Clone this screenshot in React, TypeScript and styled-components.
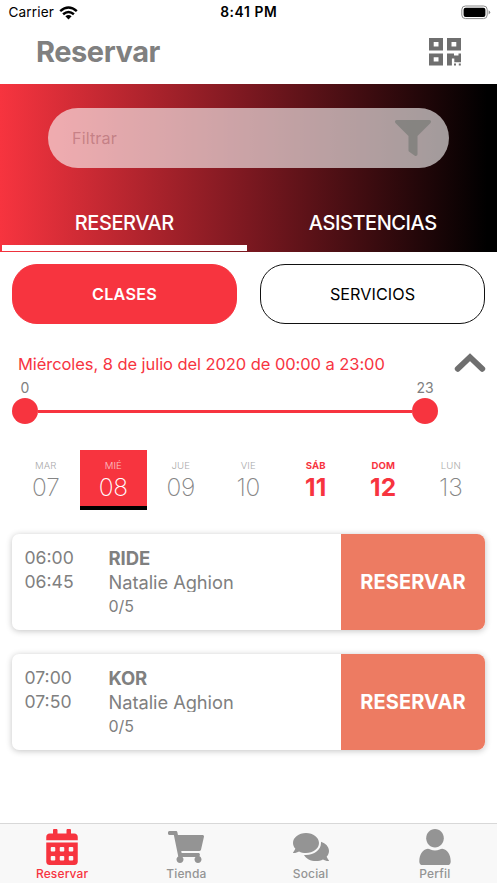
import React from 'react';
import styled, { createGlobalStyle, css } from 'styled-components';
import { FaCalendarAlt, FaShoppingCart, FaComments, FaFilter } from 'react-icons/fa';

const RED = '#f7343f';
const GREY = '#808080';

const GlobalStyle = createGlobalStyle`
  * { box-sizing: border-box; }
  body { margin: 0; background: #fff; font-family: Inter, "Liberation Sans", sans-serif; }
  button { font-family: inherit; border: 0; padding: 0; background: none; margin: 0; }
`;

const Screen = styled.div`
  width: 497px;
  height: 883px;
  display: flex;
  flex-direction: column;
  overflow: hidden;
  background: #fff;
  white-space: nowrap;
`;

const StatusBar = styled.div`
  height: 25px;
  flex: none;
  display: grid;
  grid-template-columns: 1fr auto 1fr;
  align-items: center;
  padding: 0 6px 0 8.5px;
  font-size: 13.6px;
  line-height: 25px;
  color: #000;
`;
const Carrier = styled.div`
  display: flex;
  align-items: center;
  gap: 5px;
  letter-spacing: 0.15px;
`;
const Clock = styled.div`
  font-weight: 600;
  font-size: 13.8px;
  letter-spacing: 0.6px;
  margin-right: 2px;
`;
const Battery = styled.svg`
  justify-self: end;
`;

const TitleBar = styled.header`
  height: 59px;
  flex: none;
  display: flex;
  justify-content: space-between;
  padding: 13px 36px 0 36px;
`;
const Title = styled.h1`
  margin: 0;
  font-size: 29px;
  line-height: 28px;
  font-weight: 700;
  letter-spacing: -0.45px;
  color: ${GREY};
`;

const Hero = styled.section`
  height: 168px;
  flex: none;
  display: flex;
  flex-direction: column;
  justify-content: space-between;
  padding-top: 24px;
  background: linear-gradient(90deg, ${RED} 0%, #7b1820 50%, #000 98%);
`;
const SearchField = styled.div`
  height: 60px;
  margin: 0 48px;
  border-radius: 30px;
  display: flex;
  align-items: center;
  justify-content: space-between;
  padding: 0 18px 0 24px;
  background: rgba(250, 248, 248, 0.62);
  color: rgba(128, 128, 124, 0.85);
`;
const Placeholder = styled.span`
  font-size: 16.2px;
  letter-spacing: 0.1px;
  color: rgba(150, 70, 78, 0.42);
`;
const Tabs = styled.nav`
  display: grid;
  grid-template-columns: 1fr 1fr;
  height: 60px;
`;
const Tab = styled.button<{ $active?: boolean }>`
  margin: 0 1.5px 1px 1.5px;
  border-bottom: 6px solid ${p => (p.$active ? '#fff' : 'transparent')};
  color: #fff;
  font-size: 20px;
  font-weight: 500;
  letter-spacing: -0.45px;
  line-height: 24px;
  padding-top: 8px;
`;

const Kinds = styled.div`
  display: grid;
  grid-template-columns: 225px 225px;
  gap: 23px;
  padding: 12px 12px 0;
  height: 73px;
  flex: none;
`;
const KindButton = styled.button<{ $active?: boolean }>`
  height: 60px;
  border-radius: 25px;
  font-size: 16.2px;
  color: #000;
  border: 1.3px solid #111;
  letter-spacing: 0.05px;
  ${p => p.$active && css`
    background: ${RED};
    border-color: ${RED};
    color: #fff;
    font-weight: 600;
    letter-spacing: 0.25px;
  `}
`;

const RangeHeader = styled.div`
  display: flex;
  justify-content: space-between;
  padding: 27px 11px 0 18px;
  height: 53px;
  flex: none;
`;
const RangeText = styled.div`
  color: ${RED};
  font-size: 16.5px;
  line-height: 25px;
  letter-spacing: -0.07px;
`;
const Slider = styled.div`
  padding: 0 59px 0 12px;
  height: 72px;
  flex: none;
`;
const SliderLabels = styled.div`
  display: flex;
  justify-content: space-between;
  font-size: 14px;
  line-height: 19px;
  height: 20px;
  color: ${GREY};
`;
const SliderLabel = styled.span`
  width: 26px;
  text-align: center;
`;
const Track = styled.div`
  display: flex;
  align-items: center;
`;
const Thumb = styled.div`
  width: 26px;
  height: 26px;
  border-radius: 50%;
  background: ${RED};
`;
const Line = styled.div`
  flex: 1;
  height: 3px;
  background: ${RED};
`;

const Week = styled.div`
  display: grid;
  grid-template-columns: repeat(7, 67.5px);
  padding-left: 12px;
  height: 60px;
  flex: none;
`;
const Day = styled.div<{ $kind: 'plain' | 'selected' | 'weekend' }>`
  display: flex;
  flex-direction: column;
  align-items: center;
  padding-top: 9px;
  color: #858585;
  font-weight: 300;
  ${p => p.$kind === 'selected' && css`
    background: ${RED};
    border-bottom: 4px solid #000;
    color: #fff;
  `}
  ${p => p.$kind === 'weekend' && css`
    color: ${RED};
    font-weight: 700;
  `}
`;
const DayName = styled.span<{ $bold: boolean }>`
  font-size: 9.6px;
  line-height: 14px;
  letter-spacing: ${p => (p.$bold ? '0.15px' : '0.1px')};
  opacity: ${p => (p.$bold ? 1 : 0.7)};
`;
const DayNumber = styled.span<{ $bold: boolean }>`
  font-size: 24.5px;
  line-height: 28px;
  font-weight: ${p => (p.$bold ? 700 : 200)};
  letter-spacing: ${p => (p.$bold ? '0.3px' : '-0.3px')};
`;

const ClassList = styled.main`
  flex: 1;
  display: flex;
  flex-direction: column;
  gap: 24px;
  padding: 24px 12px 0;
`;
const Card = styled.article`
  height: 96px;
  flex: none;
  display: grid;
  grid-template-columns: 96.5px 1fr 144px;
  border-radius: 7px;
  background: #fff;
  box-shadow: 0 1px 6px rgba(0, 0, 0, 0.24);
  color: ${GREY};
`;
const Times = styled.div`
  padding: 12px 0 0 12.5px;
  font-size: 17.6px;
  line-height: 24px;
`;
const Details = styled.div`
  padding-top: 12px;
`;
const ClassName = styled.div`
  font-size: 18.5px;
  line-height: 24px;
  font-weight: 700;
  letter-spacing: -0.1px;
`;
const Coach = styled.div`
  font-size: 18.3px;
  line-height: 24px;
  height: 22px;
  overflow: hidden;
  letter-spacing: -0.05px;
`;
const Seats = styled.div`
  margin-top: 2px;
  font-size: 16px;
  line-height: 24px;
`;
const BookButton = styled.button`
  background: #ed7b62;
  color: #fff;
  font-size: 20px;
  font-weight: 700;
  letter-spacing: 0.1px;
  border-radius: 0 8px 8px 0;
`;

const BottomBar = styled.nav`
  height: 60px;
  flex: none;
  display: grid;
  grid-template-columns: repeat(4, 1fr);
  border-top: 1px solid #d8d8d8;
  background: #f8f8f8;
`;
const BottomItem = styled.button<{ $active?: boolean }>`
  display: flex;
  flex-direction: column;
  align-items: center;
  padding-top: 5px;
  color: ${p => (p.$active ? RED : '#949494')};
`;
const BottomLabel = styled.span`
  font-size: 12px;
  font-weight: 500;
  line-height: 18px;
  letter-spacing: 0.15px;
`;

const WifiIcon = () => (
  <svg width="19" height="14" viewBox="0 0 19 14">
    <g fill="none" stroke="#000" strokeWidth="2.5">
      <path d="M1.2 5.1Q9.5-2 17.8 5.1" />
      <path d="M4.1 8.3Q9.5 3.7 14.9 8.3" />
    </g>
    <path d="M6.4 10.3Q9.5 7.9 12.6 10.3L9.5 13.5Z" />
  </svg>
);

const BatteryIcon = () => (
  <Battery width="30" height="15" viewBox="0 0 30 15">
    <rect x="0.8" y="1" width="25.4" height="12.6" rx="3.6" fill="#fff" stroke="#8a8a8a" strokeWidth="1" />
    <rect x="2.6" y="2.7" width="21.8" height="9.2" rx="2" />
    <path d="M27.6 5.2Q29.2 6 29.2 7.3T27.6 9.4Z" fill="#888" />
  </Battery>
);

const QrIcon = () => (
  <svg width="32" height="28" viewBox="0 0 32 28" fill="#6f6f6f">
    <path fillRule="evenodd" d="M0 0h14v12.4H0ZM4.7 4v4.4h4.8V4ZM18 0h14v12.4H18ZM22.5 4v4.4h4.8V4ZM0 15.5h14v12H0ZM4.7 19.2v4.4h4.8v-4.4Z" />
    <path d="M18 15.5h7v2h4.5v-2H32v8.8h-6.7v-3.9h-2.4v7.1H18ZM25 25.5h2v2h-2ZM29.8 25.5h2v2h-2Z" />
  </svg>
);

const ChevronUpIcon = () => (
  <svg width="32" height="22" viewBox="0 0 32 22">
    <path d="M3.7 16.8 16 5.2 28.3 16.8" fill="none" stroke="#6f6f6f" strokeWidth="5.8" strokeLinecap="round" />
  </svg>
);

const PersonIcon = ({ size }: { size: number }) => (
  <svg width={size} height={size} viewBox="0 0 36 36" fill="currentColor">
    <path d="M18 0C22.9 0 26.8 4.2 26.8 9.2S22.9 18.4 18 18.4 9.2 14.3 9.2 9.2 13.1 0 18 0Z" />
    <path d="M10.8 19.8Q12.2 19.8 13.4 20.5Q18 22.6 22.6 20.5Q23.8 19.8 25.2 19.8C30.4 20.4 33.6 25.5 33.7 32.4Q33.7 36 30.2 36H5.8Q2.3 36 2.3 32.4C2.4 25.5 5.6 20.4 10.8 19.8Z" />
  </svg>
);

const days: { name: string; number: string; kind: 'plain' | 'selected' | 'weekend' }[] = [
  { name: 'MAR', number: '07', kind: 'plain' },
  { name: 'MIÉ', number: '08', kind: 'selected' },
  { name: 'JUE', number: '09', kind: 'plain' },
  { name: 'VIE', number: '10', kind: 'plain' },
  { name: 'SÁB', number: '11', kind: 'weekend' },
  { name: 'DOM', number: '12', kind: 'weekend' },
  { name: 'LUN', number: '13', kind: 'plain' },
];

const classes = [
  { start: '06:00', end: '06:45', name: 'RIDE', coach: 'Natalie Aghion', seats: '0/5' },
  { start: '07:00', end: '07:50', name: 'KOR', coach: 'Natalie Aghion', seats: '0/5' },
];

const sections = [
  { label: 'Reservar', Icon: FaCalendarAlt, active: true },
  { label: 'Tienda', Icon: FaShoppingCart, active: false },
  { label: 'Social', Icon: FaComments, active: false },
  { label: 'Perfil', Icon: PersonIcon, active: false },
];

export default function App() {
  return (
    <Screen>
      <GlobalStyle />
      <StatusBar>
        <Carrier>Carrier <WifiIcon /></Carrier>
        <Clock>8:41 PM</Clock>
        <BatteryIcon />
      </StatusBar>
      <TitleBar>
        <Title>Reservar</Title>
        <QrIcon />
      </TitleBar>
      <Hero>
        <SearchField>
          <Placeholder>Filtrar</Placeholder>
          <FaFilter size={36} />
        </SearchField>
        <Tabs>
          <Tab $active>RESERVAR</Tab>
          <Tab>ASISTENCIAS</Tab>
        </Tabs>
      </Hero>
      <Kinds>
        <KindButton $active>CLASES</KindButton>
        <KindButton>SERVICIOS</KindButton>
      </Kinds>
      <RangeHeader>
        <RangeText>Miércoles, 8 de julio del 2020 de 00:00 a 23:00</RangeText>
        <ChevronUpIcon />
      </RangeHeader>
      <Slider>
        <SliderLabels>
          <SliderLabel>0</SliderLabel>
          <SliderLabel>23</SliderLabel>
        </SliderLabels>
        <Track><Thumb /><Line /><Thumb /></Track>
      </Slider>
      <Week>
        {days.map(d => (
          <Day key={d.number} $kind={d.kind}>
            <DayName $bold={d.kind === 'weekend'}>{d.name}</DayName>
            <DayNumber $bold={d.kind === 'weekend'}>{d.number}</DayNumber>
          </Day>
        ))}
      </Week>
      <ClassList>
        {classes.map(c => (
          <Card key={c.start}>
            <Times><div>{c.start}</div><div>{c.end}</div></Times>
            <Details>
              <ClassName>{c.name}</ClassName>
              <Coach>{c.coach}</Coach>
              <Seats>{c.seats}</Seats>
            </Details>
            <BookButton>RESERVAR</BookButton>
          </Card>
        ))}
      </ClassList>
      <BottomBar>
        {sections.map(({ label, Icon, active }) => (
          <BottomItem key={label} $active={active}>
            <Icon size={36} />
            <BottomLabel>{label}</BottomLabel>
          </BottomItem>
        ))}
      </BottomBar>
    </Screen>
  );
}
